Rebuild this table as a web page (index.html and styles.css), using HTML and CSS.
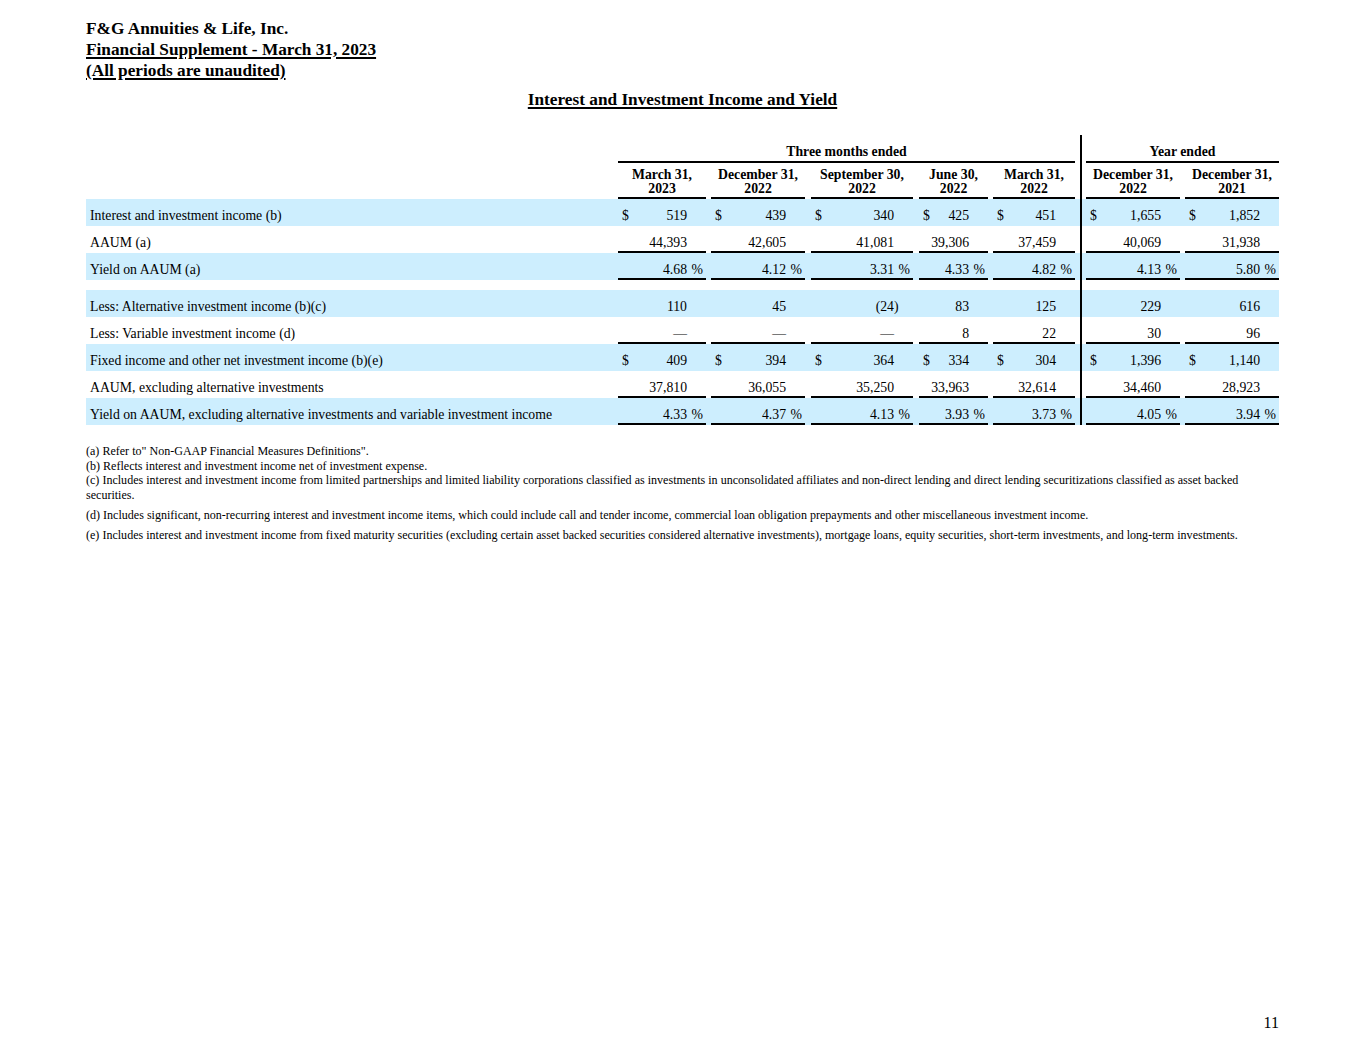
FILE: index.html
```html
<!DOCTYPE html>
<html lang="en">
<head>
<meta charset="utf-8">
<title>F&amp;G Annuities &amp; Life, Inc. - Financial Supplement</title>
<link rel="stylesheet" href="styles.css">
</head>
<body>
<div class="page">
  <header class="doc-head">
    <div class="doc-line">F&amp;G Annuities &amp; Life, Inc.</div>
    <div class="doc-line"><span class="u">Financial Supplement - March 31, 2023</span></div>
    <div class="doc-line"><span class="u">(All periods are unaudited)</span></div>
  </header>

  <h1 class="section-title"><span class="u">Interest and Investment Income and Yield</span></h1>

  <div class="fin-table">
    <div class="grid grouphead">
      <div class="lbl"></div>
      <div class="grp grp-q">Three months ended</div>
      <div class="dv"></div>
      <div class="grp grp-y">Year ended</div>
    </div>
    <div class="grid colhead">
      <div class="lbl"></div>
      <div class="ch">March 31,<br>2023</div>
      <div class="ch">December 31,<br>2022</div>
      <div class="ch">September 30,<br>2022</div>
      <div class="ch">June 30,<br>2022</div>
      <div class="ch">March 31,<br>2022</div>
      <div class="dv"></div>
      <div class="ch">December 31,<br>2022</div>
      <div class="ch">December 31,<br>2021</div>
    </div>

    <div class="grid row band">
      <div class="lbl">Interest and investment income (b)</div>
      <div class="n"><span class="cur">$</span><span class="v">519</span></div>
      <div class="n"><span class="cur">$</span><span class="v">439</span></div>
      <div class="n"><span class="cur">$</span><span class="v">340</span></div>
      <div class="n"><span class="cur">$</span><span class="v">425</span></div>
      <div class="n"><span class="cur">$</span><span class="v">451</span></div>
      <div class="dv"></div>
      <div class="n"><span class="cur">$</span><span class="v">1,655</span></div>
      <div class="n"><span class="cur">$</span><span class="v">1,852</span></div>
    </div>
    <div class="grid row ul">
      <div class="lbl">AAUM (a)</div>
      <div class="n"><span class="v">44,393</span></div>
      <div class="n"><span class="v">42,605</span></div>
      <div class="n"><span class="v">41,081</span></div>
      <div class="n"><span class="v">39,306</span></div>
      <div class="n"><span class="v">37,459</span></div>
      <div class="dv"></div>
      <div class="n"><span class="v">40,069</span></div>
      <div class="n"><span class="v">31,938</span></div>
    </div>
    <div class="grid row band ul">
      <div class="lbl">Yield on AAUM (a)</div>
      <div class="n"><span class="v">4.68</span><span class="sx pct">%</span></div>
      <div class="n"><span class="v">4.12</span><span class="sx pct">%</span></div>
      <div class="n"><span class="v">3.31</span><span class="sx pct">%</span></div>
      <div class="n"><span class="v">4.33</span><span class="sx pct">%</span></div>
      <div class="n"><span class="v">4.82</span><span class="sx pct">%</span></div>
      <div class="dv"></div>
      <div class="n"><span class="v">4.13</span><span class="sx pct">%</span></div>
      <div class="n"><span class="v">5.80</span><span class="sx pct">%</span></div>
    </div>
    <div class="grid gap"><div class="dv"></div></div>
    <div class="grid row band">
      <div class="lbl">Less: Alternative investment income (b)(c)</div>
      <div class="n"><span class="v">110</span></div>
      <div class="n"><span class="v">45</span></div>
      <div class="n"><span class="v">(24</span><span class="sx par">)</span></div>
      <div class="n"><span class="v">83</span></div>
      <div class="n"><span class="v">125</span></div>
      <div class="dv"></div>
      <div class="n"><span class="v">229</span></div>
      <div class="n"><span class="v">616</span></div>
    </div>
    <div class="grid row ul">
      <div class="lbl">Less: Variable investment income (d)</div>
      <div class="n"><span class="v">—</span></div>
      <div class="n"><span class="v">—</span></div>
      <div class="n"><span class="v">—</span></div>
      <div class="n"><span class="v">8</span></div>
      <div class="n"><span class="v">22</span></div>
      <div class="dv"></div>
      <div class="n"><span class="v">30</span></div>
      <div class="n"><span class="v">96</span></div>
    </div>
    <div class="grid row band">
      <div class="lbl">Fixed income and other net investment income (b)(e)</div>
      <div class="n"><span class="cur">$</span><span class="v">409</span></div>
      <div class="n"><span class="cur">$</span><span class="v">394</span></div>
      <div class="n"><span class="cur">$</span><span class="v">364</span></div>
      <div class="n"><span class="cur">$</span><span class="v">334</span></div>
      <div class="n"><span class="cur">$</span><span class="v">304</span></div>
      <div class="dv"></div>
      <div class="n"><span class="cur">$</span><span class="v">1,396</span></div>
      <div class="n"><span class="cur">$</span><span class="v">1,140</span></div>
    </div>
    <div class="grid row ul">
      <div class="lbl">AAUM, excluding alternative investments</div>
      <div class="n"><span class="v">37,810</span></div>
      <div class="n"><span class="v">36,055</span></div>
      <div class="n"><span class="v">35,250</span></div>
      <div class="n"><span class="v">33,963</span></div>
      <div class="n"><span class="v">32,614</span></div>
      <div class="dv"></div>
      <div class="n"><span class="v">34,460</span></div>
      <div class="n"><span class="v">28,923</span></div>
    </div>
    <div class="grid row band ul">
      <div class="lbl">Yield on AAUM, excluding alternative investments and variable investment income</div>
      <div class="n"><span class="v">4.33</span><span class="sx pct">%</span></div>
      <div class="n"><span class="v">4.37</span><span class="sx pct">%</span></div>
      <div class="n"><span class="v">4.13</span><span class="sx pct">%</span></div>
      <div class="n"><span class="v">3.93</span><span class="sx pct">%</span></div>
      <div class="n"><span class="v">3.73</span><span class="sx pct">%</span></div>
      <div class="dv"></div>
      <div class="n"><span class="v">4.05</span><span class="sx pct">%</span></div>
      <div class="n"><span class="v">3.94</span><span class="sx pct">%</span></div>
    </div>
  </div>

  <div class="notes">
    <p class="note">(a) Refer to" Non-GAAP Financial Measures Definitions".</p>
    <p class="note">(b) Reflects interest and investment income net of investment expense.</p>
    <p class="note">(c) Includes interest and investment income from limited partnerships and limited liability corporations classified as investments in unconsolidated affiliates and non-direct lending and direct lending securitizations classified as asset backed securities.</p>
    <p class="note spaced">(d) Includes significant, non-recurring interest and investment income items, which could include call and tender income, commercial loan obligation prepayments and other miscellaneous investment income.</p>
    <p class="note spaced">(e) Includes interest and investment income from fixed maturity securities (excluding certain asset backed securities considered alternative investments), mortgage loans, equity securities, short-term investments, and long-term investments.</p>
  </div>

  <footer class="page-num">11</footer>
</div>
</body>
</html>
```

FILE: styles.css
```css
* { box-sizing: border-box; }

html, body {
  margin: 0;
  padding: 0;
  background: #ffffff;
}

body {
  font-family: "Liberation Serif", "Times New Roman", serif;
  color: #000000;
}

.page {
  width: 1365px;
  min-height: 1055px;
  padding: 18px 86px 22px 86px;
  display: flex;
  flex-direction: column;
}

.u {
  text-decoration: underline;
  text-underline-offset: 2px;
  text-decoration-thickness: 1.5px;
}

.doc-head {
  font-size: 17.25px;
  font-weight: bold;
  line-height: 21px;
}

.section-title {
  margin: 8px 0 0 0;
  width: 1193px;
  text-align: center;
  font-size: 17.25px;
  font-weight: bold;
  line-height: 21px;
}

.fin-table {
  margin-top: 25px;
  width: 1193px;
  font-size: 13.75px;
  line-height: 14px;
}

.grid {
  display: grid;
  grid-template-columns: 532px 88px 99px 108px 75px 87px 11px 94px 99px;
}

.dv {
  grid-column: 7;
  background: linear-gradient(to right, transparent 5px, #000 5px, #000 7px, transparent 7px);
}

/* group header row */
.grouphead .grp {
  font-weight: bold;
  text-align: center;
  padding: 10px 0 2px 0;
  border-bottom: 2px solid #000;
}
.grp-q { grid-column: 2 / 7; }
.grp-y { grid-column: 8 / 10; }

/* column header row */
.colhead .ch {
  font-weight: bold;
  text-align: center;
  padding: 5px 0 1px 0;
  border-bottom: 2px solid #000;
}

.colhead > :nth-child(3),
.row > :nth-child(3) { margin-left: 5px; }
.colhead > :nth-child(4),
.row > :nth-child(4) { margin-left: 6px; }
.colhead > :nth-child(5),
.row > :nth-child(5) { margin-left: 6px; }
.colhead > :nth-child(6),
.row > :nth-child(6) { margin-left: 5px; }
.colhead > :nth-child(9),
.row > :nth-child(9) { margin-left: 5px; }

/* data rows */
.row {
  height: 27px;
}
.row.band { background: #cdeefe; }

.row .lbl {
  padding: 10px 0 0 4px;
  white-space: nowrap;
}

.row .n {
  display: flex;
  padding: 10px 19px 0 4px;
  white-space: nowrap;
}
.row.ul .n { border-bottom: 2px solid #000; }

.n .v { flex: 1; text-align: right; }
.n .cur { flex: none; }
.n .sx {
  flex: none;
  width: 19px;
  margin-right: -19px;
}
.n .pct { text-align: right; padding-right: 3px; }
.n .par { text-align: left; }

.gap { height: 10px; }

/* footnotes */
.notes {
  margin-top: 19px;
  width: 1193px;
  font-size: 12.05px;
  line-height: 14.5px;
}
.note { margin: 0; }
.note.spaced { margin-top: 5.5px; }

.page-num {
  margin-top: auto;
  width: 1193px;
  text-align: right;
  font-size: 16px;
  line-height: 20px;
}
```
